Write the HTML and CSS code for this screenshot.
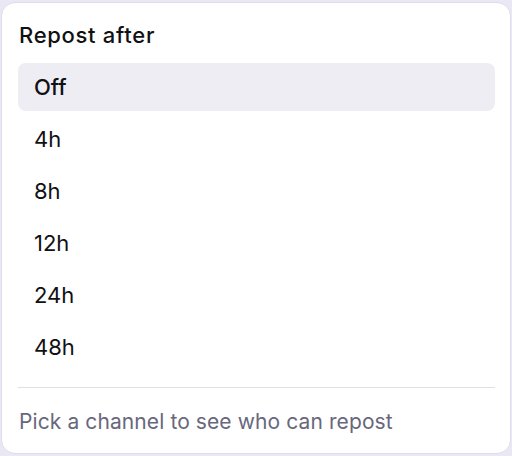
FILE: index.html
```html
<!DOCTYPE html>
<html>
<head>
<meta charset="utf-8">
<link rel="stylesheet" href="styles.css">
</head>
<body>
<div class="card">
  <div class="title">Repost after</div>
  <ul class="list">
    <li class="item active">Off</li>
    <li class="item">4h</li>
    <li class="item">8h</li>
    <li class="item">12h</li>
    <li class="item">24h</li>
    <li class="item">48h</li>
  </ul>
  <div class="divider"></div>
  <div class="footer">Pick a channel to see who can repost</div>
</div>
</body>
</html>
```

FILE: styles.css
```css
html, body {
  margin: 0;
  padding: 0;
}
body {
  background: #e9e8f4;
  width: 512px;
  height: 456px;
  font-family: Inter, "Noto Sans", sans-serif;
  color: #111114;
  box-sizing: border-box;
  padding: 2px 1px 2px 1px;
}
.card {
  background: #fff;
  border: 1px solid #dedded;
  border-radius: 14px;
  padding: 20px 15px 19px 16px;
  height: 100%;
  box-sizing: border-box;
}
.title {
  font-size: 22px;
  font-weight: 500;
  line-height: 24px;
  letter-spacing: 0.7px;
  padding-left: 1px;
  margin-bottom: 16px;
}
.list {
  list-style: none;
  margin: 0;
  padding: 0;
  display: flex;
  flex-direction: column;
  gap: 4px;
}
.item {
  height: 48px;
  display: flex;
  align-items: center;
  padding-left: 16px;
  font-size: 22px;
  border-radius: 8px;
}
.item.active {
  background: #ededf3;
  font-weight: 500;
}
.divider {
  height: 1px;
  background: #dfdfe7;
  margin-top: 16px;
}
.footer {
  margin-top: 22px;
  font-size: 21px;
  line-height: 24px;
  letter-spacing: 0.1px;
  color: #68677c;
  padding-left: 1px;
}
```
